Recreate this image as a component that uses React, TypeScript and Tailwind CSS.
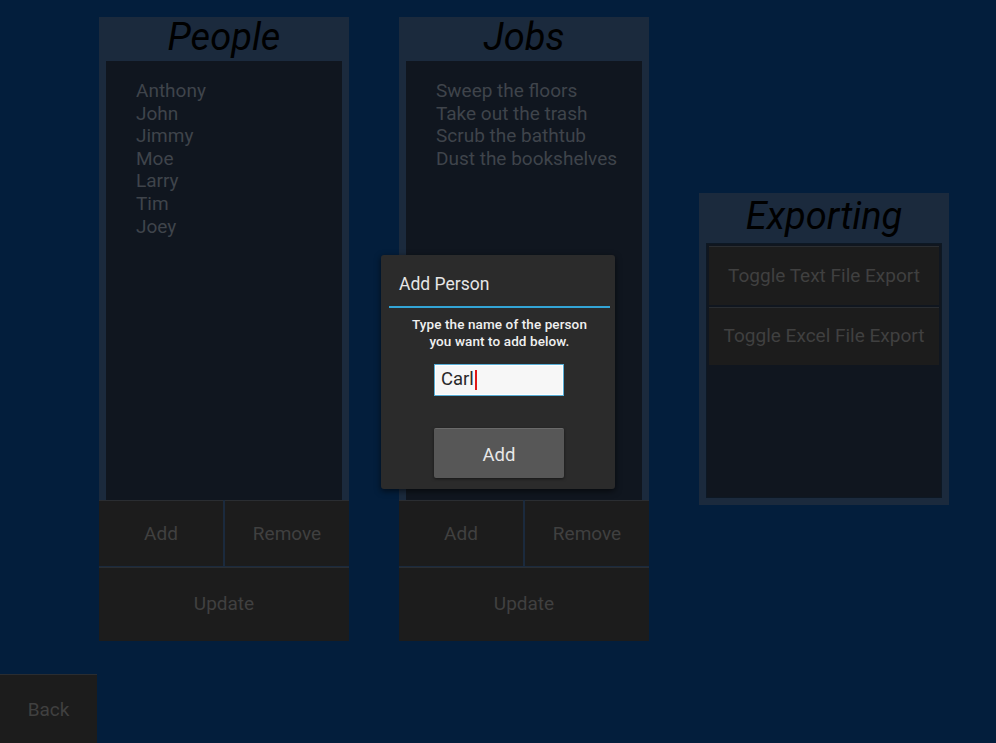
const people = ['Anthony', 'John', 'Jimmy', 'Moe', 'Larry', 'Tim', 'Joey'];
const jobs = ['Sweep the floors', 'Take out the trash', 'Scrub the bathtub', 'Dust the bookshelves'];

function DimButton({ label, className }: { label: string; className: string }) {
  return (
    <div
      className={`flex items-center justify-center bg-[#1c1c1c] border-t border-[#2a2d31] text-[19px] text-[#404040] ${className}`}
    >
      {label}
    </div>
  );
}

function ListPanel({ title, items }: { title: string; items: string[] }) {
  return (
    <div className="w-[250px] h-[624px] flex flex-col bg-[#1b2a3d]">
      {/* Header */}
      <div className="h-[44px] flex items-center justify-center pb-[5px] italic text-[38px] text-black leading-none">
        {title}
      </div>
      {/* List */}
      <div className="flex-1 mx-[7px] bg-[#10161f] pt-[19px] pl-[30px]">
        {items.map((item) => (
          <div key={item} className="text-[19px] leading-[22.6px] text-[#3f444b]">
            {item}
          </div>
        ))}
      </div>
      {/* Buttons */}
      <div className="flex gap-[2px] h-[66px]">
        <DimButton label="Add" className="flex-1 pt-[2px]" />
        <DimButton label="Remove" className="flex-1 pt-[2px]" />
      </div>
      <DimButton label="Update" className="h-[74px] mt-[1px]" />
    </div>
  );
}

function ExportPanel() {
  return (
    <div className="w-[250px] h-[312px] mt-[176px] flex flex-col bg-[#1b2a3d] pb-[7px]">
      <div className="h-[50px] flex items-center justify-center pb-[4px] italic text-[38px] text-black leading-none">
        Exporting
      </div>
      <div className="flex-1 mx-[7px] bg-[#10161f] border border-[#0d1824] p-[2px] flex flex-col gap-[2px]">
        <DimButton label="Toggle Text File Export" className="h-[59px]" />
        <DimButton label="Toggle Excel File Export" className="h-[58px]" />
      </div>
    </div>
  );
}

function AddPersonPopup() {
  return (
    <div className="absolute left-[381px] top-[255px] w-[234px] h-[234px] bg-[#2b2b2b] rounded-[3px] shadow-[0_2px_6px_rgba(0,0,0,0.6)] pl-[8px] pr-[5px] flex flex-col">
      <div className="pt-[21px] pl-[10px] text-[17.5px] text-[#e6e6e6] leading-none">Add Person</div>
      <div className="mt-[12px] h-[2px] bg-[#33a5d6]" />
      <div className="mt-[8px] text-center text-[13.5px] font-medium tracking-[0.1px] text-[#f0f0f0] leading-[17px]">
        Type the name of the person
        <br />
        you want to add below.
      </div>
      <div className="mt-[14px] ml-[45px] w-[130px] h-[32px] bg-[#f7f7f7] border-[1.5px] border-[#58aed6] shadow-[inset_0_0_0_1px_#ffffff] flex items-center pl-[6px]">
        <span className="text-[18.5px] text-[#2a2a2a] leading-none">Carl</span>
        <span className="w-[2px] h-[20px] bg-[#e01818] ml-[1px]" />
      </div>
      <div className="mt-[32px] ml-[45px] w-[130px] h-[50px] pt-[5px] bg-[#575757] border-t border-[#6a6a6a] rounded-[2px] shadow-[0_1px_3px_rgba(0,0,0,0.5)] flex items-center justify-center text-[18.5px] text-[#e8e8e8]">
        Add
      </div>
    </div>
  );
}

export default function App() {
  return (
    <div
      className="relative w-[996px] h-[743px] overflow-hidden bg-[#031e3c] flex flex-col"
      style={{ fontFamily: 'Roboto, "Noto Sans", sans-serif' }}
    >
      <div className="flex pt-[17px] pl-[99px] gap-[50px]">
        <ListPanel title="People" items={people} />
        <ListPanel title="Jobs" items={jobs} />
        <ExportPanel />
      </div>
      <DimButton label="Back" className="w-[97px] h-[69px] mt-[33px] pt-[3px]" />
      <AddPersonPopup />
    </div>
  );
}
